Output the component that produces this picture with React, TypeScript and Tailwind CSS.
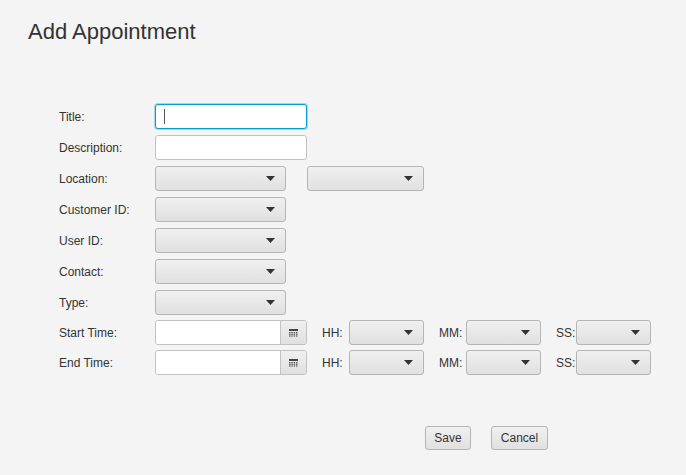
const Combo = ({ w }: { w: string }) => (
  <div className={`${w} h-[25px] rounded-[3px] border border-[#b5b5b5] bg-gradient-to-b from-[#f0f0f0] to-[#e0e0e0] flex items-center justify-end pr-[10px]`}>
    <svg width="9" height="5" viewBox="0 0 9 5"><path d="M0 0h9L4.5 5z" fill="#333" /></svg>
  </div>
);

const Field = ({ focused }: { focused?: boolean }) => (
  <div
    className={`w-[152px] h-[25px] rounded-[3px] bg-white flex items-center pl-[8px] ${
      focused ? "border border-[#039ed3] shadow-[0_0_0_1px_#9fd9f0]" : "border border-[#c2c2c2]"
    }`}
  >
    {focused && <div className="w-px h-[15px] bg-[#555]" />}
  </div>
);

const DatePick = () => (
  <div className="w-[152px] h-[25px] flex rounded-[3px] border border-[#c2c2c2] overflow-hidden">
    <div className="flex-1 bg-white" />
    <div className="w-[26px] border-l border-[#c2c2c2] bg-gradient-to-b from-[#f0f0f0] to-[#e0e0e0] flex items-center justify-center">
      <svg width="9" height="8" viewBox="0 0 9 8">
        <rect width="9" height="2" fill="#444" />
        {[0, 1, 2].map((r) =>
          [0, 1, 2, 3].map((c) => <rect key={`${r}${c}`} x={c * 2 + c * 0.33} y={3 + r * 1.7} width="1.5" height="1.2" fill="#555" />)
        )}
      </svg>
    </div>
  </div>
);

const Row = ({ label, children }: { label: string; children: React.ReactNode }) => (
  <div className="flex items-center h-[25px]">
    <div className="w-[96px] text-[12px] text-[#333]">{label}</div>
    {children}
  </div>
);

const Time = () => (
  <>
    <span className="ml-[15px] w-[27px] text-[12px] text-[#333]">HH:</span>
    <Combo w="w-[75px]" />
    <span className="ml-[15px] w-[27px] text-[12px] text-[#333]">MM:</span>
    <Combo w="w-[75px]" />
    <span className="ml-[15px] w-[20px] text-[12px] text-[#333]">SS:</span>
    <Combo w="w-[75px]" />
  </>
);

export default function App() {
  return (
    <div className="w-[686px] h-[475px] bg-[#f4f4f4] relative" style={{ fontFamily: "'Liberation Sans', Arial, sans-serif" }}>
      <h1 className="absolute left-[28px] top-[15px] text-[22px] text-[#333]">Add Appointment</h1>
      <div className="absolute left-[59px] top-[104px] flex flex-col gap-[6px]">
        <Row label="Title:"><Field focused /></Row>
        <Row label="Description:"><Field /></Row>
        <Row label="Location:">
          <Combo w="w-[131px]" />
          <div className="ml-[21px]"><Combo w="w-[117px]" /></div>
        </Row>
        <Row label="Customer ID:"><Combo w="w-[131px]" /></Row>
        <Row label="User ID:"><Combo w="w-[131px]" /></Row>
        <Row label="Contact:"><Combo w="w-[131px]" /></Row>
        <Row label="Type:"><Combo w="w-[131px]" /></Row>
        <div className="-mt-[1px]"><Row label="Start Time:"><DatePick /><Time /></Row></div>
        <div className="-mt-[1px]"><Row label="End Time:"><DatePick /><Time /></Row></div>
      </div>
      <div className="absolute left-[425px] top-[426px] flex gap-[20px]">
        <button className="h-[24px] w-[46px] text-[12px] text-[#333] rounded-[3px] border border-[#b5b5b5] bg-gradient-to-b from-[#f0f0f0] to-[#e0e0e0]">Save</button>
        <button className="h-[24px] w-[57px] text-[12px] text-[#333] rounded-[3px] border border-[#b5b5b5] bg-gradient-to-b from-[#f0f0f0] to-[#e0e0e0]">Cancel</button>
      </div>
    </div>
  );
}
